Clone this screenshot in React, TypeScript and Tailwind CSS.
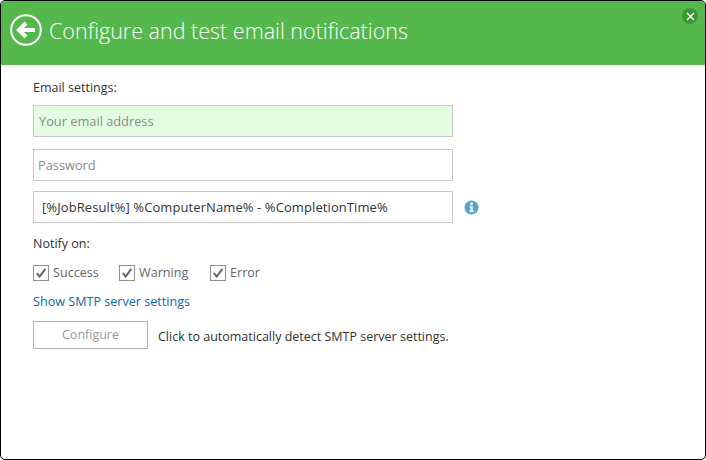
import { ReactNode } from 'react';

function Check({ label, className }: { label: string; className: string }) {
  return (
    <label className={`flex items-center ${className}`}>
      <span className="flex h-[16px] w-[16px] items-center justify-center border border-[#8f8f8f] bg-white">
        <svg width="12" height="12" viewBox="0 0 12 12" fill="none">
          <path d="M1.8 6 L4.6 9.6 L10.4 1.8" stroke="#666" strokeWidth="2" />
        </svg>
      </span>
      <span className="ml-[4px] text-[12.6px] leading-[16px] text-[#666]">{label}</span>
    </label>
  );
}

function Field({ className, children }: { className: string; children: ReactNode }) {
  return (
    <div className={`flex h-[32px] w-[420px] items-center border border-[#c8c8c8] pt-[2px] text-[12.8px] ${className}`}>
      {children}
    </div>
  );
}

export default function App() {
  return (
    <div className="h-[460px] w-[706px] overflow-hidden bg-white font-['Open_Sans',sans-serif]">
      <div className="h-[460px] w-[706px] overflow-hidden rounded-[5px] border border-black bg-white">
        {/* Header */}
        <div className="flex h-[64px] items-center bg-[#55b84d] pb-[5px] pl-[9px] pr-[7px]">
          <svg className="-mt-[1px]" width="32" height="32" viewBox="0 0 32 32" fill="none">
            <circle cx="16" cy="16" r="14.8" stroke="white" strokeWidth="2" />
            <path d="M10 16 H25 M16 9 L9 16 L16 23" stroke="white" strokeWidth="4" />
          </svg>
          <h1 className="ml-[7px] text-[21.5px] font-light leading-[32px] text-white">
            Configure and test email notifications
          </h1>
          <div className="ml-auto mt-[7px] flex h-[16px] w-[16px] items-center justify-center self-start rounded-full bg-[#3f9439]">
            <svg width="9" height="9" viewBox="0 0 9 9">
              <path d="M1 1 L8 8 M8 1 L1 8" stroke="white" strokeWidth="1.4" />
            </svg>
          </div>
        </div>

        {/* Form */}
        <div className="pl-[32px] pt-[14px]">
          <p className="text-[12.5px] leading-[18px] text-[#333]">Email settings:</p>
          <Field className="mt-[8px] bg-[#e4fde2] pl-[5px] text-[#8a8a8a]">Your email address</Field>
          <Field className="mt-[12px] pl-[4px] text-[#8a8a8a]">Password</Field>
          <div className="mt-[10px] flex items-center">
            <Field className="pl-[8px] text-[13px] tracking-[0.09px] text-[#333]">
              [%JobResult%] %ComputerName% - %CompletionTime%
            </Field>
            <svg className="ml-[11px]" width="15" height="15" viewBox="0 0 15 15">
              <circle cx="7.5" cy="7.5" r="7" fill="#5ba3c9" />
              <circle cx="7.5" cy="3.8" r="1.5" fill="white" />
              <path d="M5.5 6.2 H8.8 V10.6 H9.8 V12 H5.5 V10.6 H6.5 V7.6 H5.5 Z" fill="white" />
            </svg>
          </div>
          <p className="mt-[12px] text-[12.5px] leading-[18px] text-[#333]">Notify on:</p>
          <div className="mt-[12px] flex">
            <Check label="Success" className="w-[86px]" />
            <Check label="Warning" className="w-[91px]" />
            <Check label="Error" className="w-[60px]" />
          </div>
          <a className="mt-[12px] block text-[12.6px] leading-[18px] text-[#0b6bb0]">Show SMTP server settings</a>
          <div className="mt-[10px] flex items-center">
            <button className="h-[28px] w-[115px] border border-[#b4b4b4] bg-white text-[12.5px] text-[#999]">
              Configure
            </button>
            <span className="ml-[10px] mt-[4px] text-[12.5px] text-[#333]">
              Click to automatically detect SMTP server settings.
            </span>
          </div>
        </div>
      </div>
    </div>
  );
}
